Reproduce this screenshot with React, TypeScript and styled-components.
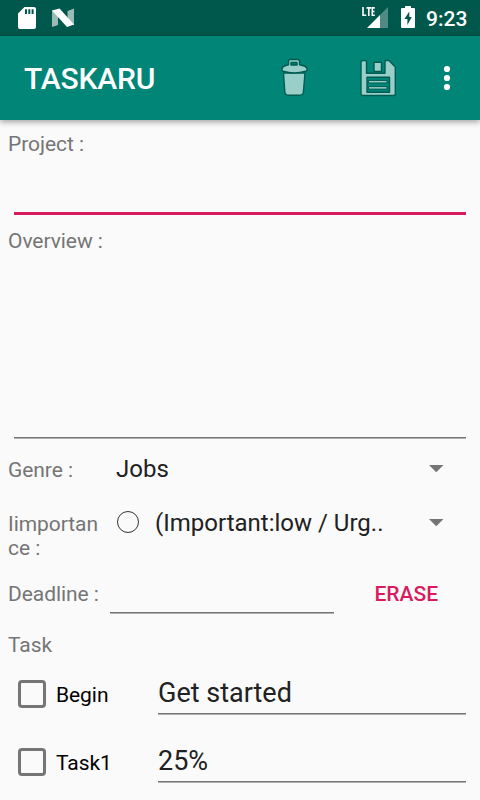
import React from "react";
import styled, { createGlobalStyle } from "styled-components";

const GlobalStyle = createGlobalStyle`
  * { box-sizing: border-box; }
  body {
    margin: 0;
    background: #fafafa;
    font-family: Roboto, "Noto Sans CJK JP", sans-serif;
    overflow: hidden;
  }
`;

const Screen = styled.div`
  width: 480px;
  height: 800px;
  overflow: hidden;
  display: flex;
  flex-direction: column;
  background: #fafafa;
`;

const StatusBar = styled.header`
  flex: none;
  height: 36px;
  display: flex;
  align-items: center;
  background: #00574b;
  padding: 0 13px 0 12px;
`;

const StatusIcon = styled.svg<{ $w: number }>`
  flex: none;
  display: block;
  width: ${(p) => p.$w}px;
  height: 36px;
`;

const Clock = styled.span`
  width: 41px;
  color: #fff;
  font-size: 21px;
  font-weight: 500;
  line-height: 36px;
  padding-top: 1px;
`;

const Spacer = styled.div`
  flex: 1;
`;

const AppBar = styled.div`
  flex: none;
  position: relative;
  height: 84px;
  display: flex;
  align-items: center;
  padding: 0 9px 0 24px;
  background: #008577;
  box-shadow: 0 2px 6px rgba(0, 0, 0, 0.36);
`;

const Title = styled.h1`
  margin: 2px 0 0;
  flex: 1;
  color: #fff;
  font-size: 30px;
  font-weight: 500;
  line-height: 36px;
  letter-spacing: -0.15px;
`;

const BarIcon = styled.svg<{ $w: number }>`
  flex: none;
  display: block;
  width: ${(p) => p.$w}px;
  height: 84px;
`;

const Form = styled.main`
  flex: 1;
  padding: 12px 14px 0 8px;
  display: flex;
  flex-direction: column;
`;

const Label = styled.label<{ $w?: number }>`
  flex: none;
  width: ${(p) => (p.$w ? p.$w + "px" : "auto")};
  padding-right: 10px;
  color: #757575;
  font-size: 21px;
  line-height: 24px;
  letter-spacing: -0.06px;
  overflow-wrap: anywhere;
`;

const Underline = styled.div<{ $focus?: boolean }>`
  height: ${(p) => (p.$focus ? 3 : 2)}px;
  background: ${(p) =>
    p.$focus ? "#d81b60" : "linear-gradient(#757575 50%, #b0b0b0 50%)"};
`;

const TextField = styled.div<{ $h: number; $left?: number; $w?: number }>`
  height: ${(p) => p.$h}px;
  margin-left: ${(p) => p.$left ?? 0}px;
  ${(p) => (p.$w ? `width: ${p.$w}px; flex: none;` : "")}
  display: flex;
  flex-direction: column;
  justify-content: flex-end;
`;

const FieldValue = styled.span`
  color: #212121;
  font-size: 27px;
  line-height: 32px;
  padding-bottom: 4px;
`;

const Row = styled.div<{ $h: number }>`
  flex: none;
  height: ${(p) => p.$h}px;
  display: flex;
  align-items: flex-start;
`;

const Select = styled.div`
  flex: 1;
  min-width: 0;
  height: 28px;
  margin-top: -3px;
  display: flex;
  align-items: center;
  padding-right: 22px;
`;

const SelectText = styled.span`
  flex: 1;
  white-space: pre;
  color: #212121;
  font-size: 24px;
  line-height: 28px;
`;

const CircleMark = styled.span`
  width: 22px;
  height: 22px;
  flex: none;
  margin: 0 16px 2px 1px;
  border: 1.3px solid #333;
  border-radius: 50%;
`;

const Caret = styled.svg`
  width: 15px;
  height: 8px;
  flex: none;
`;

const EraseButton = styled.button`
  border: 0;
  padding: 0;
  margin: 0 28px 0 auto;
  background: none;
  color: #d81b60;
  font-family: inherit;
  font-size: 21px;
  font-weight: 500;
  line-height: 24px;
`;

const Checkbox = styled.span`
  flex: none;
  width: 28px;
  height: 28px;
  margin: 0 10px 0 10px;
  border: 3px solid #757575;
  border-radius: 4px;
`;

const TaskName = styled.span`
  width: 102px;
  flex: none;
  color: #000;
  font-size: 21px;
  line-height: 24px;
  letter-spacing: -0.06px;
  padding-top: 3px;
`;

const TaskField = styled.div`
  flex: 1;
  margin-top: -3px;
  display: flex;
  flex-direction: column;
`;

const DropdownArrow = () => (
  <Caret viewBox="0 0 15 8">
    <path d="M0 0H14.5L7.25 7.2Z" fill="#757575" />
  </Caret>
);

const tasks = [
  { name: "Begin", value: "Get started" },
  { name: "Task1", value: "25%" },
];

export default function App() {
  return (
    <Screen>
      <GlobalStyle />
      <StatusBar>
        <StatusIcon $w={70} viewBox="12 0 70 36">
          <path
            fill="#fff"
            fillRule="evenodd"
            d="M24.5 7H34Q36 7 36 9V27Q36 29 34 29H20Q18 29 18 27V13.5ZM25 9.2V14H27V9.2ZM28.3 9.2V14H30.3V9.2ZM31.6 9.2V14H33.6V9.2Z"
          />
          <path fill="#9abcb7" d="M52 10L58 15.5V25L52 27ZM74 8.5L67.5 11V19L74 25.5Z" />
          <path fill="#fff" d="M52 10.5L59.5 8.5L74 24.5L67 27Z" />
        </StatusIcon>
        <Spacer />
        <StatusIcon $w={66} viewBox="360 0 66 36">
          <path
            d="M363 7V15.3H366.3M366.5 7.9H371.2M368.8 7.9V16M374.8 7.9H372.3V15.2H374.8M372.3 11.5H374.5"
            fill="none"
            stroke="#fff"
            strokeWidth="1.6"
          />
          <path d="M388 7V28H380V15Z" fill="#4f8b82" />
          <path d="M380 15V28H367Z" fill="#fff" />
          <path
            fill="#fff"
            fillRule="evenodd"
            d="M405 6H411V8H414Q415 8 415 9V27Q415 28 414 28H402Q401 28 401 27V9Q401 8 402 8H405ZM409.3 11.5L404.4 19H407.4V25L411.8 17H409.3Z"
          />
        </StatusIcon>
        <Clock>9:23</Clock>
      </StatusBar>
      <AppBar>
        <Title>TASKARU</Title>
        <BarIcon $w={60} viewBox="270 36 60 84">
          <g fill="#99cec9" stroke="#005c52" strokeWidth="1.4" strokeLinejoin="round">
            <path d="M283.5 73L284.8 92Q285 95.2 289 95.2H299Q303 95.2 303.4 92L305 73Z" />
            <path
              fillRule="evenodd"
              d="M288.5 64.8V61.5Q288.5 59.5 290.5 59.5H297.5Q299.5 59.5 299.5 61.5V64.8Q307 66 307 69V70.2Q307 71.2 305.8 71.2Q294 74.8 283.2 71.2Q282 71.2 282 70.2V69Q282 66 288.5 64.8ZM291 62.5V65H297V62.5Z"
            />
          </g>
        </BarIcon>
        <BarIcon $w={100} viewBox="330 36 100 84">
          <g fill="#99cec9" stroke="#005c52" strokeWidth="1.4" strokeLinejoin="round">
            <path
              fillRule="evenodd"
              d="M363 60.5H364.8Q366.5 60.5 366.5 62V73.2H385V60.5H389L395.3 67V94Q395.3 95.5 393.8 95.5H362.5Q361 95.5 361 94V62Q361 60.5 363 60.5ZM367 77.2V92.3H389.5V77.2Z"
            />
            <path d="M374 62.3H381.5V71.5H374Z" />
            <path d="M368.5 80.4H387V82.9H368.5ZM368.5 86.6H387V89.1H368.5Z" strokeWidth="1" />
          </g>
        </BarIcon>
        <BarIcon $w={41} viewBox="430 36 41 84">
          <g fill="#fff">
            <circle cx="447" cy="69" r="3.1" />
            <circle cx="447" cy="78" r="3.1" />
            <circle cx="447" cy="87" r="3.1" />
          </g>
        </BarIcon>
      </AppBar>
      <Form>
        <Label>Project :</Label>
        <TextField $h={59} $left={6}>
          <Underline $focus />
        </TextField>
        <Row $h={14} />
        <Label>Overview :</Label>
        <TextField $h={186} $left={6}>
          <Underline />
        </TextField>
        <Row $h={19} />
        <Row $h={54}>
          <Label $w={108}>Genre :</Label>
          <Select>
            <SelectText>Jobs</SelectText>
            <DropdownArrow />
          </Select>
        </Row>
        <Row $h={70}>
          <Label $w={108}>Iimportance :</Label>
          <Select>
            <CircleMark />
            <SelectText>(Important:low / Urg..</SelectText>
            <DropdownArrow />
          </Select>
        </Row>
        <Row $h={51}>
          <Label $w={102}>Deadline :</Label>
          <TextField $h={32} $w={224}>
            <Underline />
          </TextField>
          <EraseButton>ERASE</EraseButton>
        </Row>
        <Label>Task</Label>
        <Row $h={23} />
        {tasks.map((t) => (
          <Row $h={68} key={t.name}>
            <Checkbox />
            <TaskName>{t.name}</TaskName>
            <TaskField>
              <FieldValue>{t.value}</FieldValue>
              <Underline />
            </TaskField>
          </Row>
        ))}
      </Form>
    </Screen>
  );
}
